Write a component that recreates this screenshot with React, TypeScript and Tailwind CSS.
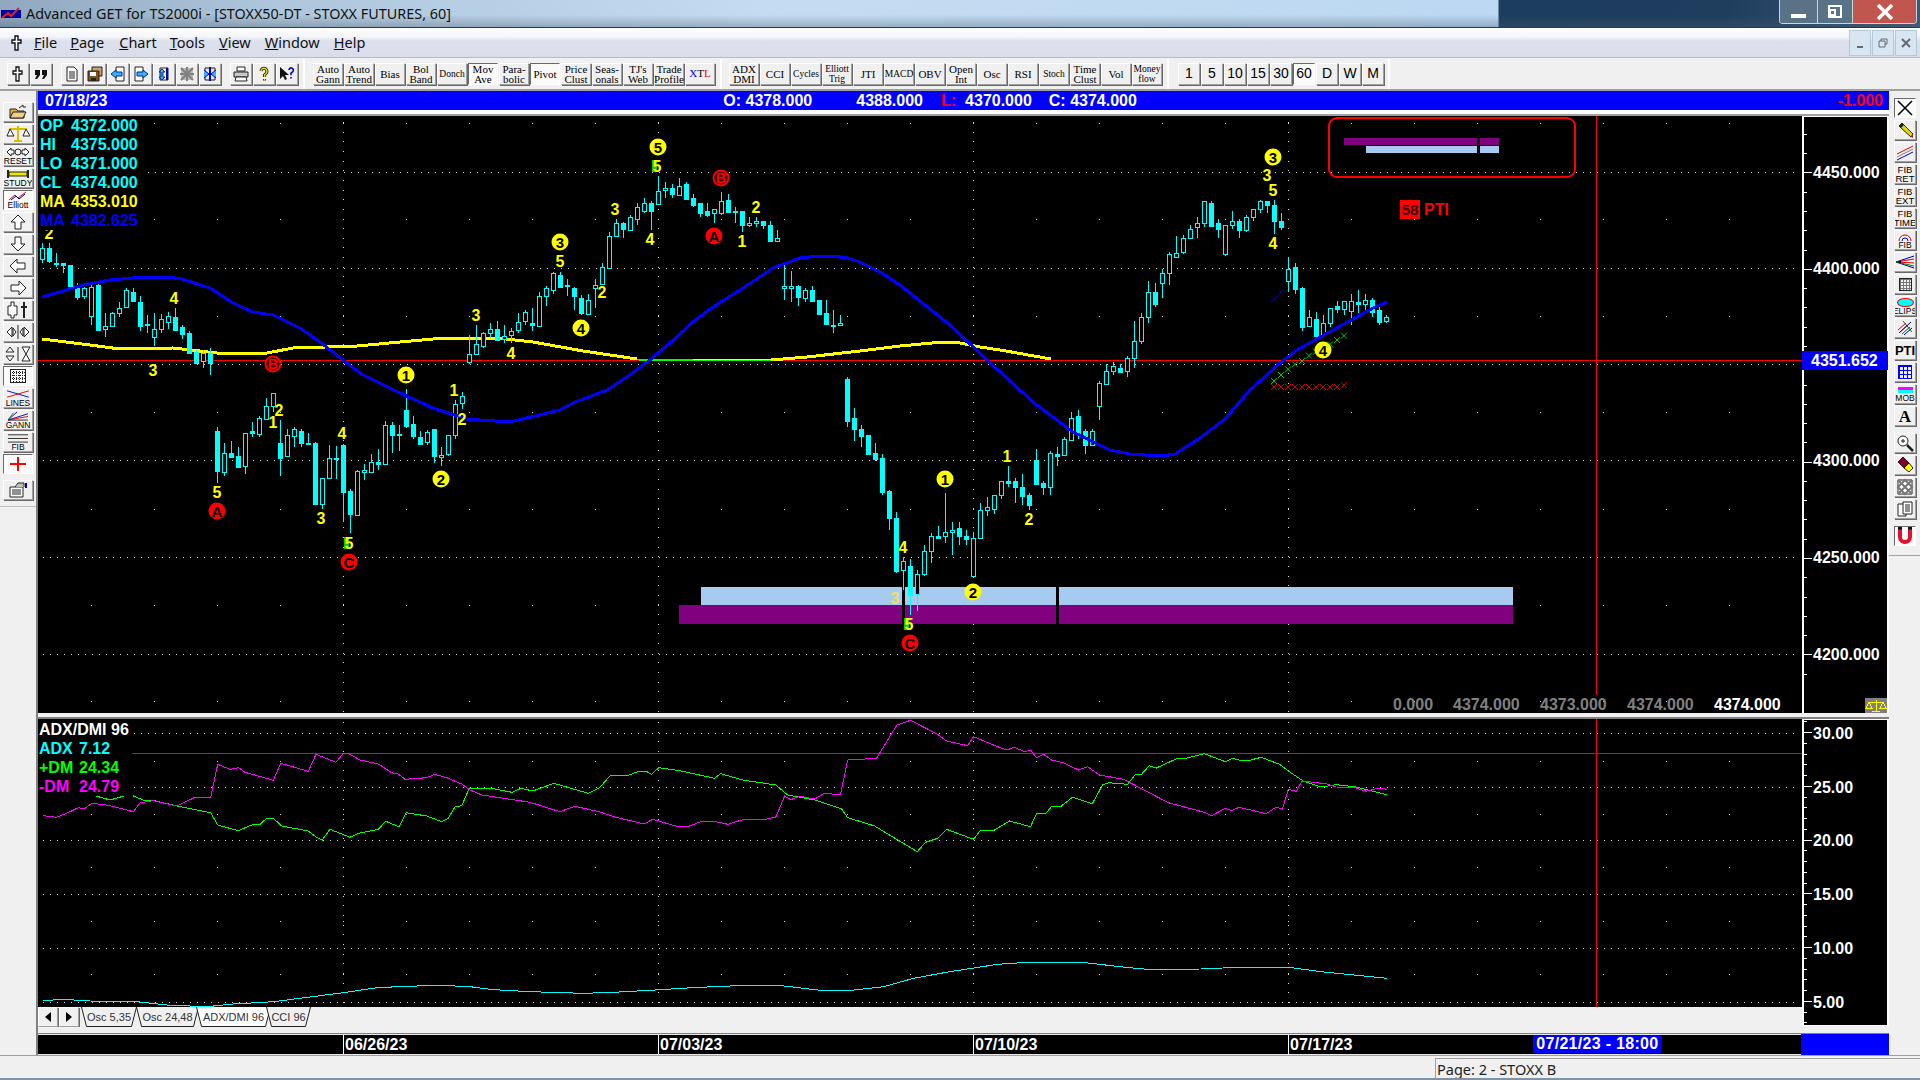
import type { ReactNode } from "react"

const sans = "font-['Liberation_Sans',Arial,sans-serif]"
const ui = "font-['Noto_Sans',sans-serif]"

// [zoomX, high, low, bodyTop, bodyBottom, filled] read off 3x crops, ox/oy is the crop origin
const seg = (ox: number, oy: number, rows: number[][]) =>
  rows.map((r) => ({ x: Math.round(ox + r[0] / 3) + 0.5, hi: oy + r[1] / 3, lo: oy + r[2] / 3, top: oy + r[3] / 3, bot: oy + r[4] / 3, f: r[5] }))

const bars = [
  ...seg(0, 240, [
    [127,10,68,25,58,0],[148,8,68,25,65,1],[169,38,82,70,73,1],[190,70,98,70,77,1],[211,76,140,76,140,1],[232,130,180,138,170,1],[253,140,178,145,170,0],[274,130,255,140,226,0],[295,130,272,136,270,1],[316,220,290,258,268,0],[337,215,262,220,258,0],[358,185,230,205,220,0],[379,145,205,150,200,0],[400,145,185,157,183,1],[421,168,272,186,258,1],[442,225,278,252,255,1],[463,220,318,268,292,0],[484,222,278,238,268,0],[505,215,268,227,245,0],[526,205,272,232,270,1],[547,255,297,260,282,1],[568,274,342,280,340,1],[589,330,372,335,368,1],[610,330,384,338,362,0],[631,325,404,338,368,1],
    [652,562,728,573,693,1],[673,608,708,640,698,0],[694,603,655,640,651,1],[715,622,684,648,682,1],[736,580,702,580,680,0],[757,545,590,574,580,1],[778,528,590,535,582,0],[799,474,540,498,538,0],[820,460,516,460,500,0],[841,540,708,610,656,1],[862,568,652,586,650,0],[883,560,622,566,586,0],[904,568,620,574,610,1],[925,580,614,609,613,1],[946,606,794,610,792,1],[967,715,806,715,792,0],[988,615,718,655,716,0],[1009,618,718,653,657,1],[1030,612,846,615,755,1],[1051,748,880,754,824,1],[1072,690,826,692,824,0],[1093,672,720,691,697,0],[1114,642,700,667,697,0],[1135,628,690,667,674,1],[1156,542,676,556,674,0],[1177,546,638,556,587,1],[1198,555,632,583,587,1],[1219,448,565,510,557,1],[1240,528,596,552,587,1],[1261,574,614,592,612,1],[1282,570,614,575,604,0],[1303,568,670,568,650,1],[1324,622,678,644,650,0],[1345,586,648,586,644,0],[1366,480,596,493,586,0],[1387,455,508,467,487,0],[1408,285,372,343,368,0],[1429,255,346,313,344,0],
  ]),
  ...seg(440, 160, [
    [130,516,563,520,560,0],[151,490,535,508,520,0],[172,484,542,508,540,1],[193,495,548,527,537,0],[214,505,550,514,526,0],[235,458,518,485,510,0],[256,450,494,457,485,0],[277,445,512,490,497,1],[298,396,498,408,497,0],[319,378,438,385,410,0],[340,335,402,340,392,0],[361,335,382,346,381,1],[382,358,408,376,380,1],[403,380,450,385,410,1],[424,404,464,414,458,1],[445,402,464,420,462,0],[466,358,444,376,385,0],[487,310,374,322,372,0],[508,215,326,228,324,0],[529,178,232,190,230,0],[550,185,234,190,208,1],[571,165,214,172,212,0],[592,130,194,142,178,0],[613,114,158,130,155,0],[634,122,210,130,155,1],[655,48,133,92,131,0],[676,67,114,85,91,0],[697,72,114,85,104,1],[718,54,106,78,104,0],[739,66,118,72,116,1],[760,102,140,115,137,1],[781,128,172,130,161,1],[802,130,170,154,167,1],[823,148,190,148,160,0],[844,96,164,124,161,0],[865,102,158,120,156,1],[886,140,188,153,157,1],[907,152,216,154,197,1],[928,170,200,190,197,0],[949,170,202,184,190,0],[970,184,206,184,197,1],[991,184,246,196,243,1],[1012,210,245,235,243,0],
    [1033,316,420,379,385,0],[1054,334,426,379,385,0],[1075,375,438,378,410,1],[1096,384,426,391,416,0],[1117,378,424,390,422,1],[1138,420,464,420,462,1],[1159,420,494,460,492,1],[1180,450,518,494,498,1],[1201,465,499,490,497,0],
  ]),
  ...seg(640, 360, [
    [622,52,202,57,182,1],[643,144,243,175,209,1],[664,196,262,208,228,1],[685,226,282,226,282,1],[706,250,302,280,297,1],[727,283,404,295,396,1],[748,390,510,394,476,1],[769,456,640,474,633,1],[790,592,690,604,632,0],[811,598,765,618,705,1],[832,630,752,643,703,0],[853,556,647,574,644,0],[874,518,609,529,575,0],[895,498,533,527,532,1],[916,400,549,517,529,0],[937,487,585,511,518,0],[958,487,555,505,530,1],[979,511,555,528,536,1],[1000,517,653,535,650,0],[1021,430,538,451,536,0],[1042,412,468,442,452,0],[1063,404,462,406,449,0],[1084,364,417,364,407,0],[1105,318,381,364,371,1],[1126,355,430,364,383,1],[1147,342,436,381,407,1],[1168,400,450,406,437,1],[1189,267,374,300,372,1],[1210,362,405,370,383,1],[1231,273,405,280,383,0],[1252,262,318,283,290,1],[1273,232,287,238,285,0],[1294,156,242,175,240,0],[1315,150,238,169,221,1],[1336,208,282,214,257,1],[1357,208,259,214,257,0],
  ]),
  ...seg(1000, 170, [
    [298,634,750,640,710,0],[319,583,644,603,641,0],[340,577,615,589,605,0],[361,583,607,595,606,1],[382,558,620,565,605,0],[403,454,594,514,566,0],[424,430,521,442,515,0],[445,334,458,367,443,0],[466,340,412,367,404,1],[487,297,384,310,341,0],[508,247,345,253,311,0],[529,198,263,248,260,0],[550,194,252,205,248,0],[571,166,208,178,206,0],[592,142,204,160,172,0],[613,94,170,94,161,0],[634,94,170,99,167,1],[655,148,204,160,179,1],[676,166,257,166,254,0],[697,124,177,154,166,0],[718,148,204,154,182,1],[739,136,185,142,182,0],[760,118,152,118,142,0],[781,90,129,94,118,0],[802,92,130,94,107,1],[823,91,192,106,155,1],[844,130,179,154,173,1],
  ]),
  ...seg(1200, 180, [
    [265,232,335,268,304,0],[286,250,342,262,327,1],[307,320,452,325,443,1],[328,390,440,412,438,0],[349,396,470,418,468,1],[370,406,469,430,467,0],[391,385,440,385,430,0],[412,362,400,378,386,1],[433,362,405,362,386,0],[454,342,435,362,392,0],[475,330,399,367,373,1],[496,343,403,361,374,0],[517,354,411,361,398,1],[538,380,435,390,426,1],[559,406,428,412,425,0],
  ]),
]

const blueMA = "42,297 63,291 83,285 110,280 143,277 167,277 182,279 210,288 233,303 253,312 273,315 300,328 320,342 343,360 363,375 400,393 433,408 467,419 480,420 510,422 560,410 573,403 607,390 627,377 650,360 670,343 693,322 713,307 740,290 773,268 800,258 818,256 833,256 848,258 860,262 880,272 900,285 925,305 950,325 987,360 1033,402 1073,432 1110,450 1130,454 1145,455 1162,456 1175,454 1200,438 1225,419 1250,390 1280,363 1297,350 1333,330 1373,308 1387,302"
const yellowA = "42,339 90,345 120,349 173,348 217,353 267,353 293,348 357,346 433,339 460,338 497,338 533,342 583,351 637,359"
const yellowB = "771,360 807,357 860,351 900,346 943,342 960,343 980,347 1000,350 1051,359"

const pts = (ox: number, oy: number, sx: number, a: number[][]) => a.map((p) => `${(ox + p[0] / sx).toFixed(1)},${(oy + p[1] / 3).toFixed(1)}`).join(" ")

const magenta =
  pts(0, 700, 3, [[130,347],[170,352],[200,340],[235,323],[253,327],[275,310],[325,316],[400,335],[420,308],[460,302],[530,318],[585,292],[632,292],[653,193],[690,208],[716,203],[735,217],[820,241],[842,190],[925,214],[948,163],[1008,187],[1030,160],[1045,160],[1080,180],[1135,192],[1175,218],[1195,222],[1215,238],[1280,233],[1305,223],[1340,233],[1385,252]]) +
  " " +
  pts(470, 715, 1.668, [[0,225],[20,240],[100,262],[150,290],[175,274],[215,290],[240,305],[290,327],[305,313],[345,334],[365,334],[385,320],[410,320],[430,328],[455,314],[490,314],[510,306],[525,243],[535,254],[550,244],[575,252],[590,236],[618,238],[630,135],[678,130],[712,30],[735,16],[780,58],[795,78],[830,92],[840,65],[880,95],[895,105],[908,97],[925,110],[935,105],[945,128],[957,118],[970,135],[990,143],[1015,165],[1030,155],[1050,180],[1090,193],[1165,263],[1225,292],[1237,302],[1260,280],[1270,287],[1283,277],[1328,296],[1345,276],[1355,283],[1365,223],[1378,229],[1388,198],[1430,207],[1445,216],[1475,217],[1495,229],[1515,219],[1530,223]])
const green1 = pts(0, 700, 3, [[288,288],[330,300],[372,288]])
const green2 =
  pts(0, 700, 3, [[398,287],[430,300],[465,302],[530,318],[632,338],[653,375],[715,392],[760,373],[780,373],[800,355],[820,355],[845,378],[925,393],[950,412],[967,420],[990,388],[1050,412],[1075,400],[1135,388],[1157,364],[1197,380],[1218,338],[1280,348],[1325,365],[1345,355],[1365,320],[1385,317],[1408,265]]) +
  " " +
  pts(470, 715, 1.668, [[0,220],[35,220],[70,232],[85,220],[105,228],[140,205],[197,235],[215,220],[235,180],[262,182],[280,170],[295,170],[303,178],[315,158],[350,167],[408,190],[418,176],[455,195],[510,210],[530,240],[575,255],[620,282],[630,308],[675,333],[746,410],[760,382],[780,370],[795,343],[840,373],[852,345],[875,345],[900,318],[935,335],[945,296],[960,296],[970,275],[985,275],[1005,247],[1038,266],[1055,210],[1065,203],[1097,208],[1110,178],[1120,178],[1133,152],[1145,159],[1180,130],[1190,132],[1225,116],[1260,140],[1272,130],[1285,136],[1300,136],[1320,127],[1350,148],[1368,172],[1390,198],[1420,216],[1445,209],[1475,215],[1530,239]])
const cyanLine =
  pts(0, 700, 3, [[130,902],[190,898],[270,903],[350,905],[410,905],[500,915],[620,920],[700,912],[820,905],[900,895],[1030,878],[1130,863],[1220,859],[1320,856]]) +
  " " +
  pts(470, 715, 1.668, [[0,815],[40,824],[90,829],[130,832],[190,835],[240,832],[300,826],[370,818],[460,811],[520,812],[580,825],[640,825],[690,815],[740,790],[800,770],[880,748],[930,742],[1020,742],[1100,758],[1130,763],[1220,762],[1280,757],[1365,757],[1420,770],[1530,790]])

const labels: [number, number, string][] = [
  [49,233,"2"],[174,298,"4"],[153,370,"3"],[476,315,"3"],[217,492,"5"],[279,410,"2"],[273,422,"1"],[321,518,"3"],[342,433,"4"],[454,390,"1"],[462,419,"2"],[511,353,"4"],[560,261,"5"],[602,292,"2"],[615,209,"3"],[650,239,"4"],[742,241,"1"],[756,207,"2"],[903,547,"4"],[895,598,"3"],[1007,456,"1"],[1029,519,"2"],[1267,175,"3"],[1273,190,"5"],[1273,243,"4"],
]
const greenFives = [[349,543],[657,166],[909,624]]
const yellowCircles: [number, number, string][] = [
  [406,375,"1"],[441,479,"2"],[560,242,"3"],[581,328,"4"],[658,147,"5"],[945,479,"1"],[973,592,"2"],[1273,157,"3"],[1323,350,"4"],
]
const redCircles: [number, number, string][] = [[217,511,"A"],[349,562,"C"],[714,236,"A"],[910,643,"C"]]
const redRings: [number, number, string][] = [[273,364,"B"],[721,178,"B"]]

const gridX = [343, 658, 973, 1288]
const sparseX = Array.from({ length: 27 }, (_, i) => 91 + i * 63)

function Cross({ x, y, c }: { x: number; y: number; c: string }) {
  return <path d={`M${x - 3} ${y - 3}L${x + 3} ${y + 3}M${x - 3} ${y + 3}L${x + 3} ${y - 3}`} stroke={c} strokeWidth="0.8" fill="none" />
}

function MainChart() {
  const crossX = [222, 243, 264, 285, 306, 327, 348, 369, 390, 411, 432]
  const crossG = [603, 585, 568, 553, 543, 527, 515, 508, 493, 480, 467]
  return (
    <svg viewBox="38 116 1851 597" width="1851" height="597" className={`block ${sans}`}>
      {[172.5, 268.5, 364.5, 460.5, 557.5, 654.5].map((y) => (
        <line key={y} x1="43" x2="1795" y1={y} y2={y} stroke="#d8d8d8" strokeDasharray="1 6" shapeRendering="crispEdges" />
      ))}
      {gridX.map((x) => (
        <line key={x} x1={x + 0.5} x2={x + 0.5} y1="122" y2="712" stroke="#d8d8d8" strokeDasharray="1 8.65" shapeRendering="crispEdges" />
      ))}
      {[123, 219, 316, 412, 509, 605, 701].map((y) =>
        sparseX.map((x) => <rect key={`${x}-${y}`} x={x} y={y} width="1" height="1" fill="#d8d8d8" />),
      )}
      <rect x="701" y="587" width="812" height="18" fill="#a6caf0" />
      <rect x="679" y="605" width="834" height="19" fill="#800080" />
      <rect x="902" y="587" width="3" height="37" fill="#000" />
      <rect x="1056" y="587" width="3" height="37" fill="#000" />
      <line x1="38" x2="1802" y1="360.5" y2="360.5" stroke="#ff0000" strokeWidth="1" shapeRendering="crispEdges" />
      <line x1="1596.5" x2="1596.5" y1="116" y2="695" stroke="#ff0000" strokeWidth="1" shapeRendering="crispEdges" />
      <rect x="1329" y="118" width="246" height="59" rx="8" fill="none" stroke="#ff0000" strokeWidth="2" />
      <rect x="1344" y="138" width="155" height="7" fill="#800080" />
      <rect x="1366" y="146" width="133" height="7" fill="#a6caf0" />
      <rect x="1477" y="138" width="3" height="15" fill="#000" />
      <polyline points={yellowA} fill="none" stroke="#ffff00" strokeWidth="3" shapeRendering="crispEdges" />
      <polyline points="637,359.5 693,360 771,360" fill="none" stroke="#00ff00" strokeWidth="2" shapeRendering="crispEdges" />
      <polyline points="693,359 771,359" fill="none" stroke="#ffff00" strokeWidth="1" shapeRendering="crispEdges" />
      <polyline points={yellowB} fill="none" stroke="#ffff00" strokeWidth="3" shapeRendering="crispEdges" />
      {bars.map((b, i) => (
        <g key={i} shapeRendering="crispEdges">
          <line x1={b.x} x2={b.x} y1={b.hi} y2={b.lo} stroke="#00ffff" />
          <rect x={b.x - 2} y={Math.round(b.top) + 0.5} width="4" height={Math.max(1, Math.round(b.bot - b.top))} fill={b.f ? "#00ffff" : "#000"} stroke="#00ffff" />
        </g>
      ))}
      <polyline points={blueMA} fill="none" stroke="#0000ff" strokeWidth="3" shapeRendering="crispEdges" />
      {crossX.map((z, i) => (
        <Cross key={z} x={1200 + z / 3} y={180 + crossG[i] / 3} c="#00ff00" />
      ))}
      {crossX.map((z, i) => (
        <Cross key={z} x={1200 + z / 3} y={i === 10 ? 385 : 387} c="#ff0000" />
      ))}
      <Cross x={1274} y={299} c="#0000c8" />
      <Cross x={1281} y={292} c="#0000c8" />
      {greenFives.map(([x, y]) => (
        <g key={x} textAnchor="middle" fontWeight="700" fontSize="16">
          <rect x={x - 5} y={y - 6} width="5" height="12" fill="#00d000" />
          <text x={x} y={y + 6} fill="#ffff00">5</text>
        </g>
      ))}
      {labels.map(([x, y, t]) => (
        <text key={`${x}-${y}`} x={x} y={y + 6} textAnchor="middle" fontWeight="700" fontSize="16" fill={x === 895 ? "#f0e060" : "#ffff00"}>
          {t}
        </text>
      ))}
      {yellowCircles.map(([x, y, t]) => (
        <g key={`${x}-${y}`} textAnchor="middle" fontWeight="700" fontSize="15">
          <circle cx={x} cy={y} r="8.5" fill="#ffff00" />
          <text x={x} y={y + 5.5} fill="#000">{t}</text>
        </g>
      ))}
      {redCircles.map(([x, y, t]) => (
        <g key={`${x}-${y}`} textAnchor="middle" fontWeight="700" fontSize="15">
          <circle cx={x} cy={y} r="8.5" fill="#ff0000" />
          <text x={x} y={y + 5.5} fill="#000">{t}</text>
        </g>
      ))}
      {redRings.map(([x, y, t]) => (
        <g key={`${x}-${y}`} textAnchor="middle" fontWeight="700" fontSize="14">
          <circle cx={x} cy={y} r="7.5" fill="#300" stroke="#ff0000" strokeWidth="2" />
          <text x={x} y={y + 5} fill="#ff0000">{t}</text>
        </g>
      ))}
      <rect x="1400" y="200" width="20" height="19" fill="#ff0000" />
      <text x="1410" y="215" textAnchor="middle" fontWeight="700" fontSize="15" fill="#300">58</text>
      <text x="1424" y="215" fontWeight="700" fontSize="16" fill="#ff0000">PTI</text>
      {/* price axis */}
      <rect x="1802" y="116" width="85" height="597" fill="#000" />
      <rect x="1802" y="116" width="2" height="597" fill="#fff" />
      <rect x="1887" y="116" width="2" height="597" fill="#fff" />
      <rect x="1802" y="116" width="87" height="1" fill="#fff" />
      {Array.from({ length: 30 }, (_, i) => {
        const y = 114.6 + i * 19.28
        const big = i % 5 === 3
        return <rect key={i} x="1804" y={Math.round(y)} width={big ? 8 : 3} height="1" fill="#fff" />
      })}
      {[[4450, 172.5], [4400, 268.5], [4300, 460.5], [4250, 557.5], [4200, 654.5]].map(([p, y]) => (
        <text key={p} x="1813" y={y + 5} fontWeight="700" fontSize="16" fill="#fff">{p.toFixed(3)}</text>
      ))}
      <rect x="1802" y="351" width="86" height="19" fill="#0000ff" />
      <text x="1811" y="366" fontWeight="700" fontSize="16" fill="#fff">4351.652</text>
      <g fontWeight="700" fontSize="16">
        <text x="1393" y="710" fill="#808080">0.000</text>
        <text x="1453" y="710" fill="#808080">4374.000</text>
        <text x="1540" y="710" fill="#808080">4373.000</text>
        <text x="1627" y="710" fill="#808080">4374.000</text>
        <text x="1714" y="710" fill="#fff">4374.000</text>
      </g>
      <rect x="1865" y="698" width="22" height="15" fill="#808080" />
      <path d="M1876 700v11M1869 702h14M1869 702l-3 6h6zM1883 702l-3 6h6zM1872 711h8" stroke="#ffff00" fill="none" shapeRendering="crispEdges" />
    </svg>
  )
}

function AdxChart() {
  return (
    <svg viewBox="38 719 1764 288" width="1764" height="288" className="block">
      {[733.5, 787.5, 840.5, 894.5, 948.5, 1002.5].map((y) => (
        <line key={y} x1="43" x2="1795" y1={y} y2={y} stroke="#d8d8d8" strokeDasharray="1 6" shapeRendering="crispEdges" />
      ))}
      {gridX.map((x) => (
        <line key={x} x1={x + 0.5} x2={x + 0.5} y1="722" y2="1007" stroke="#d8d8d8" strokeDasharray="1 8.65" shapeRendering="crispEdges" />
      ))}
      {[761, 814, 867, 921, 974].map((y) =>
        sparseX.map((x) => <rect key={`${x}-${y}`} x={x} y={y} width="1" height="1" fill="#d8d8d8" />),
      )}
      <line x1="132" x2="1802" y1="753.5" y2="753.5" stroke="#ff0000" shapeRendering="crispEdges" />
      <line x1="1596.5" x2="1596.5" y1="719" y2="1007" stroke="#ff0000" shapeRendering="crispEdges" />
      <polyline points={cyanLine} fill="none" stroke="#00ffff" shapeRendering="crispEdges" />
      <polyline points={green1} fill="none" stroke="#00ff00" shapeRendering="crispEdges" />
      <polyline points={green2} fill="none" stroke="#00ff00" shapeRendering="crispEdges" />
      <polyline points={magenta} fill="none" stroke="#ff00ff" shapeRendering="crispEdges" />
    </svg>
  )
}

function AdxAxis() {
  return (
    <svg viewBox="1802 720 87 307" width="87" height="307" className={`block ${sans}`}>
      <rect x="1802" y="720" width="87" height="307" fill="#000" />
      <rect x="1802" y="720" width="2" height="307" fill="#fff" />
      <rect x="1887" y="720" width="2" height="307" fill="#fff" />
      <rect x="1802" y="720" width="87" height="1" fill="#fff" />
      <rect x="1802" y="1026" width="87" height="1" fill="#fff" />
      {Array.from({ length: 29 }, (_, i) => {
        const y = 722.4 + i * 10.75
        const big = i % 5 === 1
        return <rect key={i} x="1804" y={Math.round(y)} width={big ? 8 : 3} height="1" fill="#fff" />
      })}
      {[["30.00", 733.5], ["25.00", 787.5], ["20.00", 840.5], ["15.00", 894.5], ["10.00", 948.5], ["5.00", 1002.5]].map(([t, y]) => (
        <text key={t} x="1813" y={Number(y) + 6.5} fontWeight="700" fontSize="16" fill="#fff">{t}</text>
      ))}
    </svg>
  )
}

const raised = "border border-t-white border-l-white border-r-[#a0a0a0] border-b-[#a0a0a0] shadow-[1px_1px_0_#696969] bg-[#f0f0f0]"
const pressed = "border border-t-[#696969] border-l-[#696969] border-r-white border-b-white bg-[#fbfbfb]"

function TextBtn({ t, on, tiny }: { t: string; on?: boolean; tiny?: boolean }) {
  return (
    <div className={`w-[30px] h-[22px] mr-[1px] flex items-center justify-center text-center whitespace-pre text-black font-['Liberation_Serif',serif] leading-[10px] ${tiny ? "text-[9.5px]" : "text-[11px]"} ${on ? pressed : raised}`}>
      {t}
    </div>
  )
}

function NumBtn({ t, on }: { t: string; on?: boolean }) {
  return <div className={`w-[22px] h-[22px] mr-[1px] flex items-center justify-center text-[14px] text-black ${sans} ${on ? pressed : raised}`}>{t}</div>
}

function ToolIcon({ children, on }: { children: ReactNode; on?: boolean }) {
  return (
    <div className={`w-[22px] h-[22px] mr-[1px] flex items-center justify-center ${on ? pressed : raised}`}>
      <svg viewBox="0 0 16 16" width="16" height="16">{children}</svg>
    </div>
  )
}

function SideBtn({ children, label, on, w }: { children: ReactNode; label?: string; on?: boolean; w: string }) {
  return (
    <div className={`${w} h-[20px] mb-[2px] flex flex-col items-center justify-center overflow-hidden ${on ? pressed : raised}`}>
      {children}
      {label && <span className={`text-[8.5px] leading-[8px] text-black ${sans}`}>{label}</span>}
    </div>
  )
}

const wL = "w-[30px]"
const wR = "w-[22px]"

const candleGlyph = "M6 1h3v4h3v3H9v7H6V8H3V5h3z"

const Tabs = [
  { t: "Osc 5,35", w: 56, m: 2, on: false },
  { t: "Osc 24,48", w: 63, m: -1, on: false },
  { t: "ADX/DMI 96", w: 75, m: -3, on: true },
  { t: "CCI 96", w: 45, m: -5, on: false },
]

function Tab({ t, w, m, on }: { t: string; w: number; m: number; on: boolean }) {
  return (
    <div className="relative h-[20px] flex items-center justify-center text-[11px] text-[#333]" style={{ width: w, marginLeft: m }}>
      <svg className="absolute inset-0" width={w} height="20">
        <path d={`M0.5 0L5.5 19.5H${w - 5.5}L${w - 0.5} 0`} fill={on ? "#fff" : "#f0f0f0"} stroke="#222" />
      </svg>
      <span className="relative">{t}</span>
    </div>
  )
}

export default function App() {
  return (
    <div className={`w-[1920px] h-[1080px] flex flex-col overflow-hidden bg-[#f0f0f0] ${sans}`}>
      {/* window title */}
      <div className="h-[28px] flex items-center border-b border-[#2a3a48] bg-[linear-gradient(180deg,transparent_55%,rgba(70,90,110,0.35)_100%),linear-gradient(90deg,#8fa8bf_0%,#aec6db_14%,#c4dcf1_40%,#bcd8f2_78%,#1d3d5e_78.1%,#1f3e5e_90%,#3b5a78_100%)]">
        <svg viewBox="0 0 20 16" width="20" height="16" className="ml-[1px]">
          <path d="M0 4h20v8H0z" fill="#0000a0" />
          <path d="M1 12L7 7l3 3 8-8" stroke="#e02020" strokeWidth="2" fill="none" />
        </svg>
        <span className={`ml-[5px] text-[14.4px] text-[#111] ${ui}`}>Advanced GET for TS2000i - [STOXX50-DT - STOXX FUTURES, 60]</span>
        <div className="ml-auto mr-[3px] self-start flex h-[24px] rounded-b-[4px] border border-t-0 border-[#c8d4de] overflow-hidden">
          <div className="w-[38px] flex items-end justify-center pb-[5px] bg-[#5a7286] border-r border-[#c8d4de]">
            <div className="w-[15px] h-[4px] bg-white" />
          </div>
          <div className="w-[35px] flex items-center justify-center bg-[#5a7286] border-r border-[#c8d4de]">
            <div className="relative w-[14px] h-[13px] border-2 border-white">
              <div className="absolute -left-[1px] top-[2px] w-[7px] h-[7px] border-2 border-white bg-[#5a7286]" />
            </div>
          </div>
          <div className="w-[63px] flex items-center justify-center bg-[#c0564e]">
            <svg viewBox="0 0 18 16" width="18" height="16"><path d="M2 1l14 14M16 1L2 15" stroke="#fff" strokeWidth="3.5" /></svg>
          </div>
        </div>
      </div>
      {/* menu */}
      <div className={`h-[30px] flex items-center border-b border-[#b8bcc8] bg-[linear-gradient(180deg,#ffffff_0%,#f3f5fa_30%,#dde1ee_45%,#d9ddea_100%)] text-[14.5px] text-[#111] ${ui}`}>
        <svg viewBox="0 0 16 16" width="16" height="20" className="ml-[9px]"><path d={candleGlyph} fill="#fff" stroke="#111" strokeWidth="1.4" /></svg>
        <span className="ml-[9px]"><u>F</u>ile</span>
        <span className="ml-[13px]"><u>P</u>age</span>
        <span className="ml-[15px]"><u>C</u>hart</span>
        <span className="ml-[13px]"><u>T</u>ools</span>
        <span className="ml-[14px]"><u>V</u>iew</span>
        <span className="ml-[14px]"><u>W</u>indow</span>
        <span className="ml-[14px]"><u>H</u>elp</span>
        <div className="ml-auto mr-[3px] flex gap-[1px] text-[#556]">
          <div className="w-[22px] h-[26px] flex items-end justify-center pb-[7px] bg-[#d8e6f2] border border-[#b4c8da]"><div className="w-[6px] h-[2px] bg-[#667]" /></div>
          <div className="w-[22px] h-[26px] flex items-center justify-center bg-[#d8e6f2] border border-[#b4c8da]"><svg viewBox="0 0 10 10" width="10" height="10"><path d="M3 3V1h6v5H7M1 3h6v6H1z" fill="none" stroke="#667" /></svg></div>
          <div className="w-[22px] h-[26px] flex items-center justify-center bg-[#d8e6f2] border border-[#b4c8da]"><svg viewBox="0 0 10 10" width="10" height="10"><path d="M1 1l8 8M9 1L1 9" stroke="#667" strokeWidth="2" /></svg></div>
        </div>
      </div>
      {/* toolbar */}
      <div className="h-[33px] flex items-center bg-[#f0f0f0] pl-[7px] border-b-2 border-[#a0a0a0]">
        <ToolIcon><path d={candleGlyph} fill="#fff" stroke="#111" strokeWidth="1.3" /></ToolIcon>
        <ToolIcon><path d="M2 4h5v5l-3 4H2l2-4H2zM9 4h5v5l-3 4H9l2-4H9z" fill="#111" /></ToolIcon>
        <div className="w-[8px]" />
        <ToolIcon><path d="M3 1h7l3 3v11H3z" fill="#fff" stroke="#222" /><path d="M5 6h6M5 8h6M5 10h6M5 12h6" stroke="#222" /></ToolIcon>
        <ToolIcon><path d="M5 1h10v9H5z" fill="#d0a060" stroke="#222" /><path d="M1 5h11v10H1z" fill="#805020" stroke="#222" /><path d="M3 6h6v4H3z" fill="#fff" /><path d="M4 12h5v3H4z" fill="#222" /></ToolIcon>
        <ToolIcon><path d="M6 1h8v14H6z" fill="#fff" stroke="#222" /><path d="M1 8l5-4v2h6v4H6v2z" fill="#38b0ff" stroke="#003090" /></ToolIcon>
        <ToolIcon><path d="M2 1h8v14H2z" fill="#fff" stroke="#222" /><path d="M15 8l-5-4v2H4v4h6v2z" fill="#38b0ff" stroke="#003090" /></ToolIcon>
        <ToolIcon><path d="M4 2h8v12H4z" fill="#fff" stroke="#222" /><path d="M6 3l-3 3h2v5H3l3 3 3-3H7V6h2z" fill="#38b0ff" stroke="#003090" /><path d="M11 2v12" stroke="#0000c0" strokeWidth="2" /></ToolIcon>
        <ToolIcon><path d="M2 2h12v12H2z" fill="#b8b8b8" /><path d="M2 2l12 12M14 2L2 14M8 1v14M1 8h14" stroke="#808080" strokeWidth="2" /></ToolIcon>
        <ToolIcon><path d="M3 2h10v12H3z" fill="#e8e8e8" stroke="#222" /><path d="M2 4l5 4-5 4M14 4L9 8l5 4" fill="#38b0ff" stroke="#0000c0" /><path d="M8 1v14" stroke="#0000c0" strokeWidth="2" /></ToolIcon>
        <div className="w-[8px]" />
        <ToolIcon><path d="M4 1h8v4H4z" fill="#fff" stroke="#222" /><path d="M1 6h14v5H1z" fill="#c8c8c8" stroke="#222" /><path d="M3 11l-1 4h12l-1-4z" fill="#fff" stroke="#222" /></ToolIcon>
        <ToolIcon><path d="M5 5a3 3 0 1 1 5 2.5L8.5 9v2M8.5 13v1.5" fill="none" stroke="#111" strokeWidth="3" /><path d="M5 5a3 3 0 1 1 5 2.5L8.5 9v2M8.5 13v1.5" fill="none" stroke="#e8e800" strokeWidth="1.4" /></ToolIcon>
        <ToolIcon><path d="M1 1v12l3-3 2 4 2-1-2-4h4z" fill="#111" /><path d="M10 4a2.2 2.2 0 1 1 3.6 1.8L12 7.2v2M12 11v1.5" fill="none" stroke="#0000c0" strokeWidth="1.6" /></ToolIcon>
        <div className="w-[6px] h-[30px] border-r-2 border-white" />
        <div className="w-[8px]" />
        {["Auto\nGann", "Auto\nTrend", "Bias", "Bol\nBand"].map((t) => <TextBtn key={t} t={t} />)}
        <TextBtn t="Donch" tiny />
        <TextBtn t={"Mov\nAve"} on />
        <TextBtn t={"Para-\nbolic"} />
        <TextBtn t="Pivot" on />
        {["Price\nClust", "Seas-\nonals", "TJ's\nWeb", "Trade\nProfile"].map((t) => <TextBtn key={t} t={t} />)}
        <div className="w-[30px] h-[22px] mr-[1px] flex items-center justify-center text-[11px] font-['Liberation_Serif',serif] border border-t-white border-l-white border-r-[#a0a0a0] border-b-[#a0a0a0] shadow-[1px_1px_0_#696969]">
          <span className="text-[#0000ff]">X</span><span className="text-black">T</span><span className="text-[#ff0000]">L</span>
        </div>
        <div className="w-[6px] h-[30px] border-r-2 border-white" />
        <div className="w-[7px]" />
        <TextBtn t={"ADX\nDMI"} />
        <TextBtn t="CCI" />
        <TextBtn t="Cycles" tiny />
        <TextBtn t={"Elliott\nTrig"} tiny />
        <TextBtn t="JTI" />
        <TextBtn t="MACD" tiny />
        <TextBtn t="OBV" />
        <TextBtn t={"Open\nInt"} />
        <TextBtn t="Osc" />
        <TextBtn t="RSI" />
        <TextBtn t="Stoch" tiny />
        <TextBtn t={"Time\nClust"} />
        <TextBtn t="Vol" />
        <TextBtn t={"Money\nflow"} tiny />
        <div className="w-[6px] h-[30px] border-r-2 border-white" />
        <div className="w-[9px]" />
        {["1", "5", "10", "15", "30"].map((t) => <NumBtn key={t} t={t} />)}
        <NumBtn t="60" on />
        {["D", "W", "M"].map((t) => <NumBtn key={t} t={t} />)}
        <div className="w-[5px] h-[30px] border-r-2 border-white" />
      </div>
      {/* body */}
      <div className="h-[965px] flex border-b border-[#a0a0a0]">
        <div className="w-[38px] shrink-0 border-r-2 border-[#808080] pl-[3px] pt-[11px] flex flex-col">
          <SideBtn w={wL}><svg viewBox="0 0 20 16" width="20" height="16"><path d="M2 5h6l2 2h6v7H2z" fill="#e0b040" stroke="#222" /><path d="M2 14l3-6h13l-3 6z" fill="#f0d080" stroke="#222" /><path d="M11 4l4-3v2h3" fill="none" stroke="#222" /></svg></SideBtn>
          <SideBtn w={wL}><svg viewBox="0 0 24 18" width="24" height="18"><path d="M12 1v15M3 4h18M8 16h8" stroke="#d8c000" strokeWidth="2" /><path d="M4 4L1 11h7zM20 4l-3 7h7z" fill="#fff" stroke="#222" /></svg></SideBtn>
          <SideBtn w={wL} label="RESET"><svg viewBox="0 0 24 10" width="24" height="10"><path d="M1 5l4-4v2h3v4H5v2zM23 5l-4-4v2h-3v4h3v2z" fill="#fff" stroke="#222" /><circle cx="12" cy="5" r="3" fill="none" stroke="#222" /></svg></SideBtn>
          <SideBtn w={wL} label="STUDY"><svg viewBox="0 0 24 10" width="24" height="10"><path d="M3 3h18v4H3z" fill="#e8e800" stroke="#222" /><path d="M2 1v8M22 1v8" stroke="#222" strokeWidth="2" /></svg></SideBtn>
          <SideBtn w={wL} label="Elliott" on><svg viewBox="0 0 24 10" width="24" height="10"><path d="M3 9l6-5 3 3 8-6" fill="none" stroke="#e00000" /><path d="M5 9l5-4 3 3 6-5" fill="none" stroke="#0000c0" /></svg></SideBtn>
          <SideBtn w={wL}><svg viewBox="0 0 18 16" width="18" height="16"><path d="M9 1l7 7h-4v7H6V8H2z" fill="#fff" stroke="#222" /></svg></SideBtn>
          <SideBtn w={wL}><svg viewBox="0 0 18 16" width="18" height="16"><path d="M9 15l7-7h-4V1H6v7H2z" fill="#fff" stroke="#222" /></svg></SideBtn>
          <SideBtn w={wL}><svg viewBox="0 0 18 16" width="18" height="16"><path d="M1 8l7-7v4h8v6H8v4z" fill="#fff" stroke="#222" /></svg></SideBtn>
          <SideBtn w={wL}><svg viewBox="0 0 18 16" width="18" height="16"><path d="M17 8l-7-7v4H2v6h8v4z" fill="#fff" stroke="#222" /></svg></SideBtn>
          <SideBtn w={wL}><svg viewBox="0 0 26 18" width="26" height="18"><path d="M6 1h3v4h3v9H9v3H6v-3H3V5h3z" fill="#fff" stroke="#222" /><path d="M19 1v16M16 6h6" stroke="#222" strokeWidth="2" /></svg></SideBtn>
          <SideBtn w={wL}><svg viewBox="0 0 26 16" width="26" height="16"><path d="M13 1v14" stroke="#222" /><path d="M2 8l5-5v10zM11 8l-3-4v8zM15 8l3-4v8zM24 8l-5-5v10z" fill="#fff" stroke="#222" /></svg></SideBtn>
          <SideBtn w={wL}><svg viewBox="0 0 26 16" width="26" height="16"><path d="M5 1L1 6h8zM5 15L1 10h8z" fill="#fff" stroke="#222" /><path d="M13 1v14" stroke="#222" /><path d="M17 1h8l-4 7 4 7h-8l4-7z" fill="#fff" stroke="#222" /></svg></SideBtn>
          <SideBtn w={wL} on><svg viewBox="0 0 16 14" width="16" height="14"><rect x="0.5" y="0.5" width="15" height="13" fill="#fff" stroke="#222" /><path d="M0 3.5h16M0 6.5h16M0 9.5h16M3.5 0v14M6.5 0v14M9.5 0v14M12.5 0v14" stroke="#222" strokeDasharray="1 1" /></svg></SideBtn>
          <SideBtn w={wL} label="LINES"><svg viewBox="0 0 26 11" width="26" height="11"><path d="M1 2l24 7" stroke="#0000c0" /><path d="M1 9l24-7" stroke="#e00000" /></svg></SideBtn>
          <SideBtn w={wL} label="GANN"><svg viewBox="0 0 26 11" width="26" height="11"><path d="M2 10l10-9M2 10l22-7" stroke="#0000c0" /><path d="M2 10L24 6" stroke="#e00000" /><path d="M2 10l6-8" stroke="#008000" /><path d="M2 10h22" stroke="#222" /></svg></SideBtn>
          <SideBtn w={wL} label="FIB"><svg viewBox="0 0 26 11" width="26" height="11"><path d="M2 2h22M2 6h22M2 10h22" stroke="#222" /></svg></SideBtn>
          <SideBtn w={wL} on><svg viewBox="0 0 18 16" width="18" height="16"><path d="M9 1v14M1 8h16" stroke="#ff0000" strokeWidth="2" /></svg></SideBtn>
          <div className="mt-[4px]">
            <SideBtn w={wL}><svg viewBox="0 0 20 16" width="20" height="16"><path d="M2 5h13v10H2z" fill="#fff" stroke="#222" /><path d="M4 8h9M4 10h9M4 12h9" stroke="#222" /><path d="M7 5l3-4h6v4" fill="#c0c0c0" stroke="#222" /><path d="M18 1v5" stroke="#0000c0" strokeWidth="2" /></svg></SideBtn>
          </div>
          <div className="mt-[4px] -ml-[3px] h-[1px] bg-[#c0c0c0]" />
        </div>
        <div className="w-[1851px] shrink-0 flex flex-col">
          <div className="h-[19px] flex items-center bg-[#0000ff] text-[16px] font-bold text-white">
            <span className="ml-[7px]">07/18/23</span>
            <span className="ml-[616px]">O: 4378.000</span>
            <span className="ml-[44px]">4388.000</span>
            <span className="ml-[18px] text-[#ff0000]">L:</span>
            <span className="ml-[9px]">4370.000</span>
            <span className="ml-[17px]">C: 4374.000</span>
            <span className="ml-auto mr-[6px] text-[#ff0000]">-1.000</span>
          </div>
          <div className="h-[6px] bg-white border-b-2 border-[#a0a0a0]" />
          <div className="relative h-[597px] bg-black">
            <MainChart />
            <div className="absolute left-0 top-0 w-[109px] pl-[2px] bg-black text-[16px] font-bold leading-[19px]">
              {[["OP", "4372.000", "text-[#00ffff]"], ["HI", "4375.000", "text-[#00ffff]"], ["LO", "4371.000", "text-[#00ffff]"], ["CL", "4374.000", "text-[#00ffff]"], ["MA", "4353.010", "text-[#ffff00]"], ["MA", "4382.625", "text-[#0000ff]"]].map(([a, b, c], i) => (
                <div key={i} className={`flex ${c}`}>
                  <span className="w-[31px]">{a}</span>
                  <span>{b}</span>
                </div>
              ))}
            </div>
          </div>
          <div className="h-[6px] bg-[#f0f0f0] border-b-2 border-[#808080]" />
          <div className="h-[308px] flex">
            <div className="w-[1764px] flex flex-col">
              <div className="relative h-[288px] bg-black">
                <AdxChart />
                <div className="absolute left-0 top-0 w-[94px] pl-[1px] pt-[1px] bg-black text-[16px] font-bold leading-[19px]">
                  <div className="text-white whitespace-nowrap">ADX/DMI 96</div>
                  <div className="flex text-[#00ffff]"><span className="w-[40px]">ADX</span><span>7.12</span></div>
                  <div className="flex text-[#00ff00]"><span className="w-[40px]">+DM</span><span>24.34</span></div>
                  <div className="flex text-[#ff00ff]"><span className="w-[40px]">-DM</span><span>24.79</span></div>
                </div>
              </div>
              <div className="h-[20px] flex items-start bg-[#f0f0f0]">
                <div className={`w-[20px] h-[20px] flex items-center justify-center ${raised}`}><div className="w-0 h-0 border-y-[5px] border-y-transparent border-r-[6px] border-r-black" /></div>
                <div className={`w-[20px] h-[20px] ml-[1px] flex items-center justify-center ${raised}`}><div className="w-0 h-0 border-y-[5px] border-y-transparent border-l-[6px] border-l-black" /></div>
                {Tabs.map((t) => <Tab key={t.t} {...t} />)}
              </div>
            </div>
            <AdxAxis />
          </div>
          <div className="h-[7px] bg-[#f0f0f0] border-b border-[#808080]" />
          <div className="h-[22px] flex">
            <div className="w-[1763px] flex bg-black border-y border-[#e8e8e8] text-[16px] font-bold text-white">
              <div className="w-[305px]" />
              <div className="w-[315px] border-l border-white pl-[1px] leading-[19px]">06/26/23</div>
              <div className="w-[315px] border-l border-white pl-[1px] leading-[19px]">07/03/23</div>
              <div className="w-[315px] border-l border-white pl-[1px] leading-[19px]">07/10/23</div>
              <div className="flex-1 flex border-l border-white pl-[1px] leading-[19px]">
                07/17/23
                <span className="ml-[181px] pl-[3px] h-[18px] bg-[#0000ff] whitespace-nowrap leading-[18px] tracking-[0.3px] w-[128px]">07/21/23 - 18:00</span>
              </div>
            </div>
            <div className="w-[88px] bg-[#0000ff]" />
          </div>
        </div>
        <div className="w-[31px] shrink-0 pl-[5px] pt-[7px] flex flex-col">
          <SideBtn w={wR} on><svg viewBox="0 0 18 18" width="18" height="18"><path d="M2 2l14 14M16 2L2 16" stroke="#000" strokeWidth="1.5" /></svg></SideBtn>
          <SideBtn w={wR}><svg viewBox="0 0 18 18" width="18" height="18"><path d="M3 5l3-3 11 11-2 3z" fill="#e8d800" stroke="#222" /><path d="M3 5l3-3 2 2-3 3z" fill="#222" /><path d="M15 16l2-3v4z" fill="#c02020" /></svg></SideBtn>
          <SideBtn w={wR}><svg viewBox="0 0 18 18" width="18" height="18"><path d="M1 11L17 3" stroke="#e00000" /><path d="M1 14L17 6" stroke="#808080" /><path d="M1 17L17 9" stroke="#0000c0" /></svg></SideBtn>
          {["FIB\nRET", "FIB\nEXT", "FIB\nTIME"].map((t) => (
            <SideBtn key={t} w={wR}><span className={`text-[9.5px] leading-[9px] text-center whitespace-pre text-black ${sans}`}>{t}</span></SideBtn>
          ))}
          <SideBtn w={wR} label="FIB"><svg viewBox="0 0 18 10" width="18" height="10"><path d="M3 10a6 6 0 0 1 12 0" fill="none" stroke="#e00000" /><path d="M6 10a3 3 0 0 1 6 0" fill="none" stroke="#0000c0" /></svg></SideBtn>
          <SideBtn w={wR}><svg viewBox="0 0 20 16" width="20" height="16"><path d="M1 8L19 2M1 8L19 14" stroke="#0000c0" /><path d="M1 8L19 5M1 8l18 1" stroke="#e00000" /><path d="M1 8l18 4" stroke="#008000" /><path d="M1 8l5-1v2z" fill="#000" /></svg></SideBtn>
          <SideBtn w={wR}><div className="w-[13px] h-[13px] border border-[#222] bg-[linear-gradient(#777_1px,transparent_1px),linear-gradient(90deg,#777_1px,transparent_1px)] bg-[size:3px_3px]" /></SideBtn>
          <SideBtn w={wR} label="ELIPS"><div className="w-[17px] h-[9px] rounded-[50%] bg-[#00ffff] border border-[#ff0000]" /></SideBtn>
          <SideBtn w={wR}><svg viewBox="0 0 18 16" width="18" height="16"><path d="M2 10L10 3M4 12l8-7" stroke="#e00000" /><path d="M6 14l8-7M7 1l9 11" stroke="#008000" /><path d="M3 13L15 2M8 15L16 8" stroke="#0000c0" /></svg></SideBtn>
          <SideBtn w={wR}><span className={`text-[13px] font-bold leading-[13px] text-black ${sans}`}>PTI</span></SideBtn>
          <SideBtn w={wR}><div className="w-[14px] h-[14px] border border-[#0000ff] bg-[linear-gradient(#0000ff_1px,transparent_1px),linear-gradient(90deg,#0000ff_1px,transparent_1px)] bg-[size:4px_4px]" /></SideBtn>
          <SideBtn w={wR} label="MOB"><div className="w-[15px] h-[3px] bg-[#ff00ff]" /><div className="w-[15px] h-[3px] bg-[#00ffff] mb-[1px]" /></SideBtn>
          <SideBtn w={wR}><span className="font-['Liberation_Serif',serif] text-[17px] font-bold leading-[17px] text-black">A</span></SideBtn>
          <div className="mt-[5px]">
            <SideBtn w={wR}><svg viewBox="0 0 18 18" width="18" height="18"><circle cx="7" cy="7" r="5" fill="#fff" stroke="#222" /><path d="M11 11l6 6" stroke="#222" strokeWidth="2.5" /><path d="M5 7h4M7 5v4" stroke="#222" /></svg></SideBtn>
          </div>
          <SideBtn w={wR}><svg viewBox="0 0 18 18" width="18" height="18"><path d="M2 6l5-5 6 6-5 5z" fill="#800030" stroke="#222" /><path d="M8 12l5-5 4 5-4 4z" fill="#ffff00" stroke="#222" /></svg></SideBtn>
          <SideBtn w={wR}><svg viewBox="0 0 18 18" width="18" height="18"><path d="M2 2h14v14H2z" fill="#fff" stroke="#222" /><path d="M2 2l14 14M16 2L2 16M9 2l7 7-7 7-7-7z" stroke="#777" strokeWidth="2" fill="none" /></svg></SideBtn>
          <SideBtn w={wR}><svg viewBox="0 0 18 18" width="18" height="18"><path d="M2 4h8v12H2z" fill="#fff" stroke="#222" /><path d="M7 2h9v12H7z" fill="#fff" stroke="#222" /><path d="M9 5h5M9 7h5M9 9h5M9 11h5" stroke="#222" /></svg></SideBtn>
          <div className="mt-[5px]">
            <SideBtn w={wR} on><svg viewBox="0 0 18 18" width="18" height="18"><path d="M4 1v9a5 5 0 0 0 10 0V1" fill="none" stroke="#e01030" strokeWidth="4" /><path d="M2 1h4M12 1h4" stroke="#111" strokeWidth="3" /></svg></SideBtn>
          </div>
          <div className="mt-[7px] -ml-[5px] h-[1px] bg-[#a0a0a0]" />
        </div>
      </div>
      {/* status */}
      <div className="h-[24px] flex flex-col">
        <div className="h-[22px] flex items-end">
          <div className={`ml-[1435px] flex-1 h-[20px] pl-[1px] border-t border-l border-[#a0a0a0] text-[14.5px] leading-[20px] text-[#222] ${ui}`}>Page: 2 - STOXX B</div>
        </div>
        <div className="h-[2px] bg-[#7f93a6]" />
      </div>
    </div>
  )
}
